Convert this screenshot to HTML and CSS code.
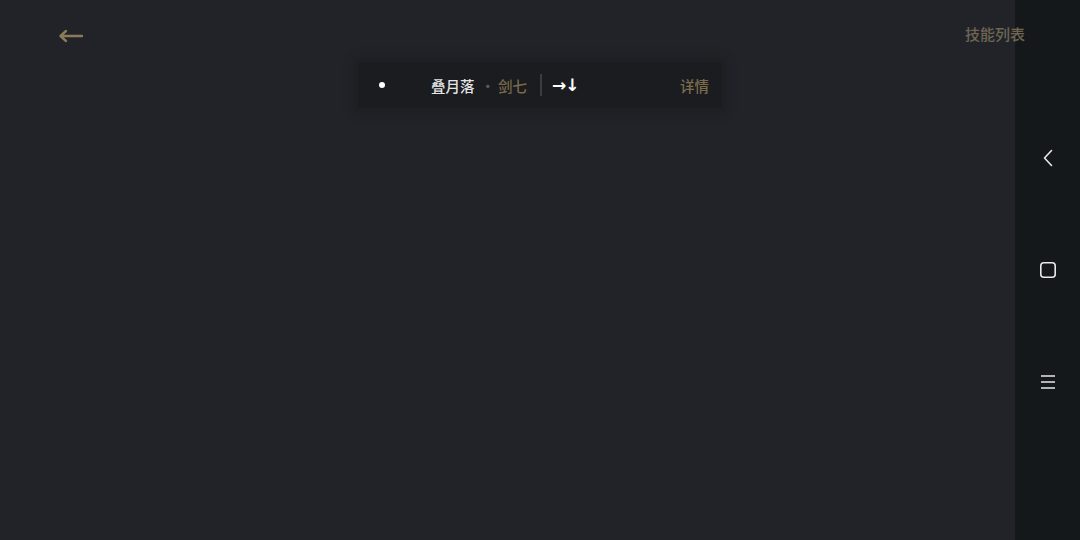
FILE: index.html
```html
<!DOCTYPE html>
<html lang="zh-CN">
<head>
    <meta charset="UTF-8">
    <title>技能列表</title>
    <link rel="stylesheet" href="styles.css">
</head>
<body>
    <div class="screen">
        <!-- Barra de navegação -->
        <nav class="navbar">
            <svg width="12" height="18" viewBox="0 0 12 18">
                <path d="M9.5 1.5L2.5 9L9.5 16.5" fill="none" stroke="#e8e8e8" stroke-width="1.6" stroke-linecap="round" stroke-linejoin="round"/>
            </svg>
            <svg width="18" height="18" viewBox="0 0 18 18">
                <rect x="1.8" y="1.8" width="14.4" height="14.4" rx="3" fill="none" stroke="#e8e8e8" stroke-width="1.6"/>
            </svg>
            <svg width="18" height="18" viewBox="0 0 18 18">
                <path d="M2 3H16M2 9H16M2 15H16" fill="none" stroke="#e8e8e8" stroke-width="1.4"/>
            </svg>
        </nav>

        <main class="stage">
            <header class="topbar">
                <div class="back">
                    <svg width="26" height="14" viewBox="0 0 26 14">
                        <path d="M24 7H3M8 2L2.5 7L8 12" fill="none" stroke="#8c7b59" stroke-width="2.4" stroke-linecap="round" stroke-linejoin="round"/>
                    </svg>
                </div>
                <a class="skill-list" href="#">技能列表</a>
            </header>

            <div class="combo-bar">
                <span class="dot"></span>
                <span class="skill-name">叠月落</span>
                <span class="sep">·</span>
                <span class="skill-type">剑七</span>
                <span class="divider"></span>
                <span class="keys">→↓</span>
                <a class="detail" href="#">详情</a>
            </div>
        </main>
    </div>
</body>
</html>
```

FILE: styles.css
```css
body {
    margin: 0;
    padding: 0;
    background: #212328;
    font-family: "Noto Sans CJK SC", "Noto Sans", sans-serif;
    overflow: hidden;
}
.screen {
    position: relative;
    width: 1080px;
    height: 540px;
}
.stage {
    position: relative;
    z-index: 1;
    height: 100%;
    display: flex;
    flex-direction: column;
    align-items: center;
}
.topbar {
    width: 100%;
    box-sizing: border-box;
    display: flex;
    justify-content: space-between;
    align-items: center;
    padding: 0 55px 0 58px;
    height: 66px;
}
.back {
    display: flex;
    align-items: center;
    margin-top: 6px;
}
.skill-list {
    color: #6e6552;
    font-size: 15px;
    font-weight: 500;
    text-decoration: none;
}
.combo-bar {
    margin-top: -4px;
    width: 364px;
    height: 46px;
    box-sizing: border-box;
    display: flex;
    align-items: center;
    padding: 0 13px 0 21px;
    background: #1a1c20;
    box-shadow: 0 0 8px 4px rgba(26, 28, 32, 0.6);
    color: #e6e6e6;
    font-size: 14.5px;
    font-weight: 500;
}
.dot {
    width: 6px;
    height: 6px;
    border-radius: 50%;
    background: #ffffff;
    margin-right: 46px;
}
.skill-name {
    color: #e4e4e4;
}
.sep {
    color: #5b5b5b;
    margin: 0 3px 0 6px;
}
.skill-type {
    color: #7a6a4a;
}
.divider {
    width: 2px;
    height: 22px;
    background: #3a3c40;
    margin: 0 10px 0 13px;
}
.keys {
    color: #ffffff;
    font-size: 17px;
    font-weight: bold;
    font-family: "DejaVu Sans", sans-serif;
    letter-spacing: -1px;
}
.detail {
    margin-left: auto;
    color: #7d6c4c;
    text-decoration: none;
}
.navbar {
    position: absolute;
    top: 0;
    right: 0;
    width: 65px;
    height: 100%;
    background: #15181b;
    display: flex;
    flex-direction: column;
    align-items: center;
    gap: 94px;
    padding-top: 149px;
    box-sizing: border-box;
}
```
